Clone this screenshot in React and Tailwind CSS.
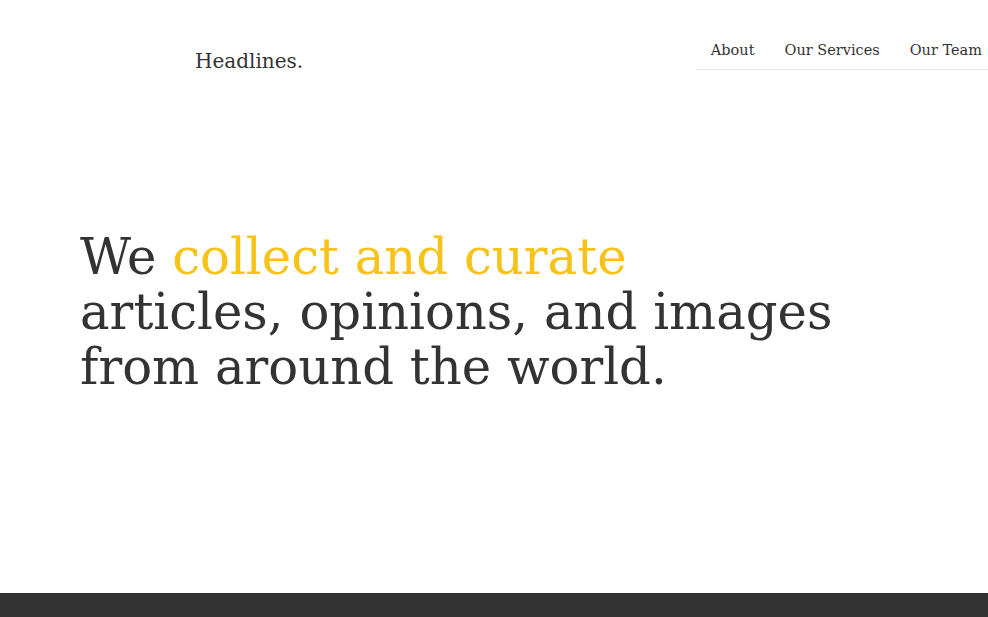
export default function App() {
  return (
    <div className="min-h-screen bg-white text-[#333] overflow-hidden" style={{ fontFamily: '"DejaVu Serif", "Liberation Serif", serif' }}>
      <header className="flex items-start justify-between h-[100px]">
        <div className="pl-[195px] pt-[49px] text-[20px] leading-6">Headlines.</div>
        <nav className="mt-[36px] pl-[15px] pr-[6px] border-b border-[#e5e5e5] flex gap-[30px] text-[14.5px] leading-[28px] pb-[5px]">
          <a href="#">About</a>
          <a href="#">Our Services</a>
          <a href="#">Our Team</a>
        </nav>
      </header>
      <section className="h-[493px] pl-[80px] pt-[130px]">
        <h1 className="text-[49.7px] leading-[55px] font-normal">
          We <span className="text-[#f7c318]">collect and curate</span>
          <br />
          articles, opinions, and images
          <br />
          from around the world.
        </h1>
      </section>
      <footer className="h-[40px] bg-[#333]" />
    </div>
  )
}
